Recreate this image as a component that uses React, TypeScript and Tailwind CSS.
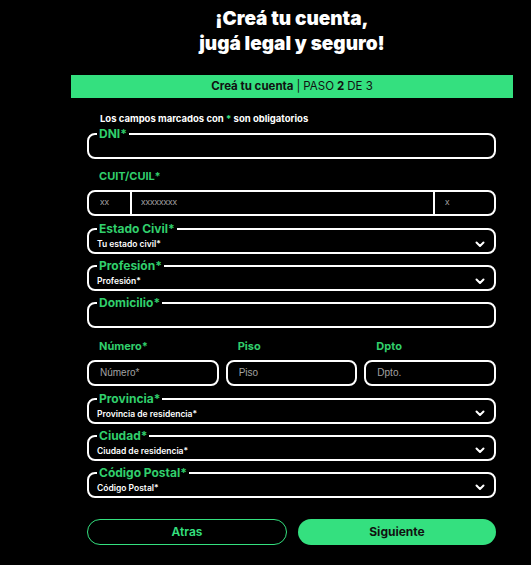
const font = "font-['Inter','Liberation_Sans',sans-serif]";

const Chevron = () => (
  <svg width="10" height="7" viewBox="0 0 10 7" fill="none" className="shrink-0 mr-[1px]">
    <polyline points="1.5,1.5 5,5 8.5,1.5" stroke="white" strokeWidth="2" strokeLinecap="round" strokeLinejoin="round" />
  </svg>
);

const Field = ({ label, value, select }: { label: string; value?: string; select?: boolean }) => (
  <fieldset className="h-[31px] rounded-[8px] border-2 border-white pl-[8px] pr-[8px] pt-[4px] flex items-center justify-between">
    <legend className="px-[2px] text-[12px] leading-[12px] font-bold text-[#31cf6c]">{label}</legend>
    {select ? (
      <>
        <span className="text-[8.5px] leading-[10px] font-semibold text-white">{value}</span>
        <Chevron />
      </>
    ) : (
      <input className="w-full bg-transparent outline-none text-white text-[10px]" />
    )}
  </fieldset>
);

const SmallInput = ({ placeholder }: { placeholder: string }) => (
  <input
    placeholder={placeholder}
    className="h-[26px] w-full min-w-0 rounded-[8px] border-2 border-white bg-transparent px-[11px] text-[10px] font-['Liberation_Sans',sans-serif] text-white placeholder:text-[#a3a3a3] outline-none"
  />
);

export default function App() {
  return (
    <div className={`min-h-[565px] w-full bg-black ${font}`}>
      <div className="ml-[71px] w-[442px] pt-[6px]">
        <h1 className="text-center text-[19px] leading-[25px] font-black text-white">
          ¡Creá tu cuenta,
          <br />
          jugá legal y seguro!
        </h1>

        <div className="mt-[19px] h-[23px] bg-[#34e07f] flex items-center justify-center text-[11.5px] text-[#111]">
          <span className="font-bold">Creá tu cuenta</span>
          <span className="mx-[3px]">|</span>
          <span>PASO </span>
          <span className="font-bold mx-[3px]">2</span>
          <span>DE 3</span>
        </div>

        <div className="px-[16px] pr-[17px]">
          <p className="mt-[15px] ml-[13px] text-[9.5px] leading-[12px] font-bold text-white">
            Los campos marcados con <span className="text-[#34e07f]">*</span> son obligatorios
          </p>

          <div className="mt-[3px]">
            <Field label="DNI*" />
          </div>

          <p className="mt-[11px] ml-[12px] text-[11px] leading-[12px] font-bold text-[#31cf6c]">CUIT/CUIL*</p>
          <div className="mt-[8px] flex h-[26px] rounded-[8px] border-2 border-white">
            <input
              placeholder="xx"
              className="w-[43px] min-w-0 border-r-2 border-white bg-transparent pl-[11px] text-[9px] font-['Liberation_Sans',sans-serif] text-white placeholder:text-[#a3a3a3] outline-none"
            />
            <input
              placeholder="xxxxxxxx"
              className="flex-1 min-w-0 border-r-2 border-white bg-transparent pl-[9px] text-[9px] font-['Liberation_Sans',sans-serif] text-white placeholder:text-[#a3a3a3] outline-none"
            />
            <input
              placeholder="x"
              className="w-[59px] min-w-0 bg-transparent pl-[10px] text-[9px] font-['Liberation_Sans',sans-serif] text-white placeholder:text-[#a3a3a3] outline-none"
            />
          </div>

          <div className="mt-[7px] flex flex-col gap-[6px]">
            <Field label="Estado Civil*" value="Tu estado civil*" select />
            <Field label="Profesión*" value="Profesión*" select />
            <Field label="Domicilio*" />
          </div>

          <div className="mt-[12px] grid grid-cols-3 gap-x-[7px]">
            <p className="ml-[12px] text-[11px] leading-[12px] font-bold text-[#31cf6c]">Número*</p>
            <p className="ml-[12px] text-[11px] leading-[12px] font-bold text-[#31cf6c]">Piso</p>
            <p className="ml-[12px] text-[11px] leading-[12px] font-bold text-[#31cf6c]">Dpto</p>
            <div className="mt-[6px]">
              <SmallInput placeholder="Número*" />
            </div>
            <div className="mt-[6px]">
              <SmallInput placeholder="Piso" />
            </div>
            <div className="mt-[6px]">
              <SmallInput placeholder="Dpto." />
            </div>
          </div>

          <div className="mt-[7px] flex flex-col gap-[6px]">
            <Field label="Provincia*" value="Provincia de residencia*" select />
            <Field label="Ciudad*" value="Ciudad de residencia*" select />
            <Field label="Código Postal*" value="Código Postal*" select />
          </div>

          <div className="mt-[21px] flex gap-[11px]">
            <button className="h-[26px] flex-1 rounded-full border border-[#34e07f] text-[12px] font-semibold text-[#34e07f]">
              Atras
            </button>
            <button className="h-[26px] flex-1 rounded-full bg-[#34e07f] text-[12px] font-bold text-[#111]">
              Siguiente
            </button>
          </div>
        </div>
      </div>
    </div>
  );
}
